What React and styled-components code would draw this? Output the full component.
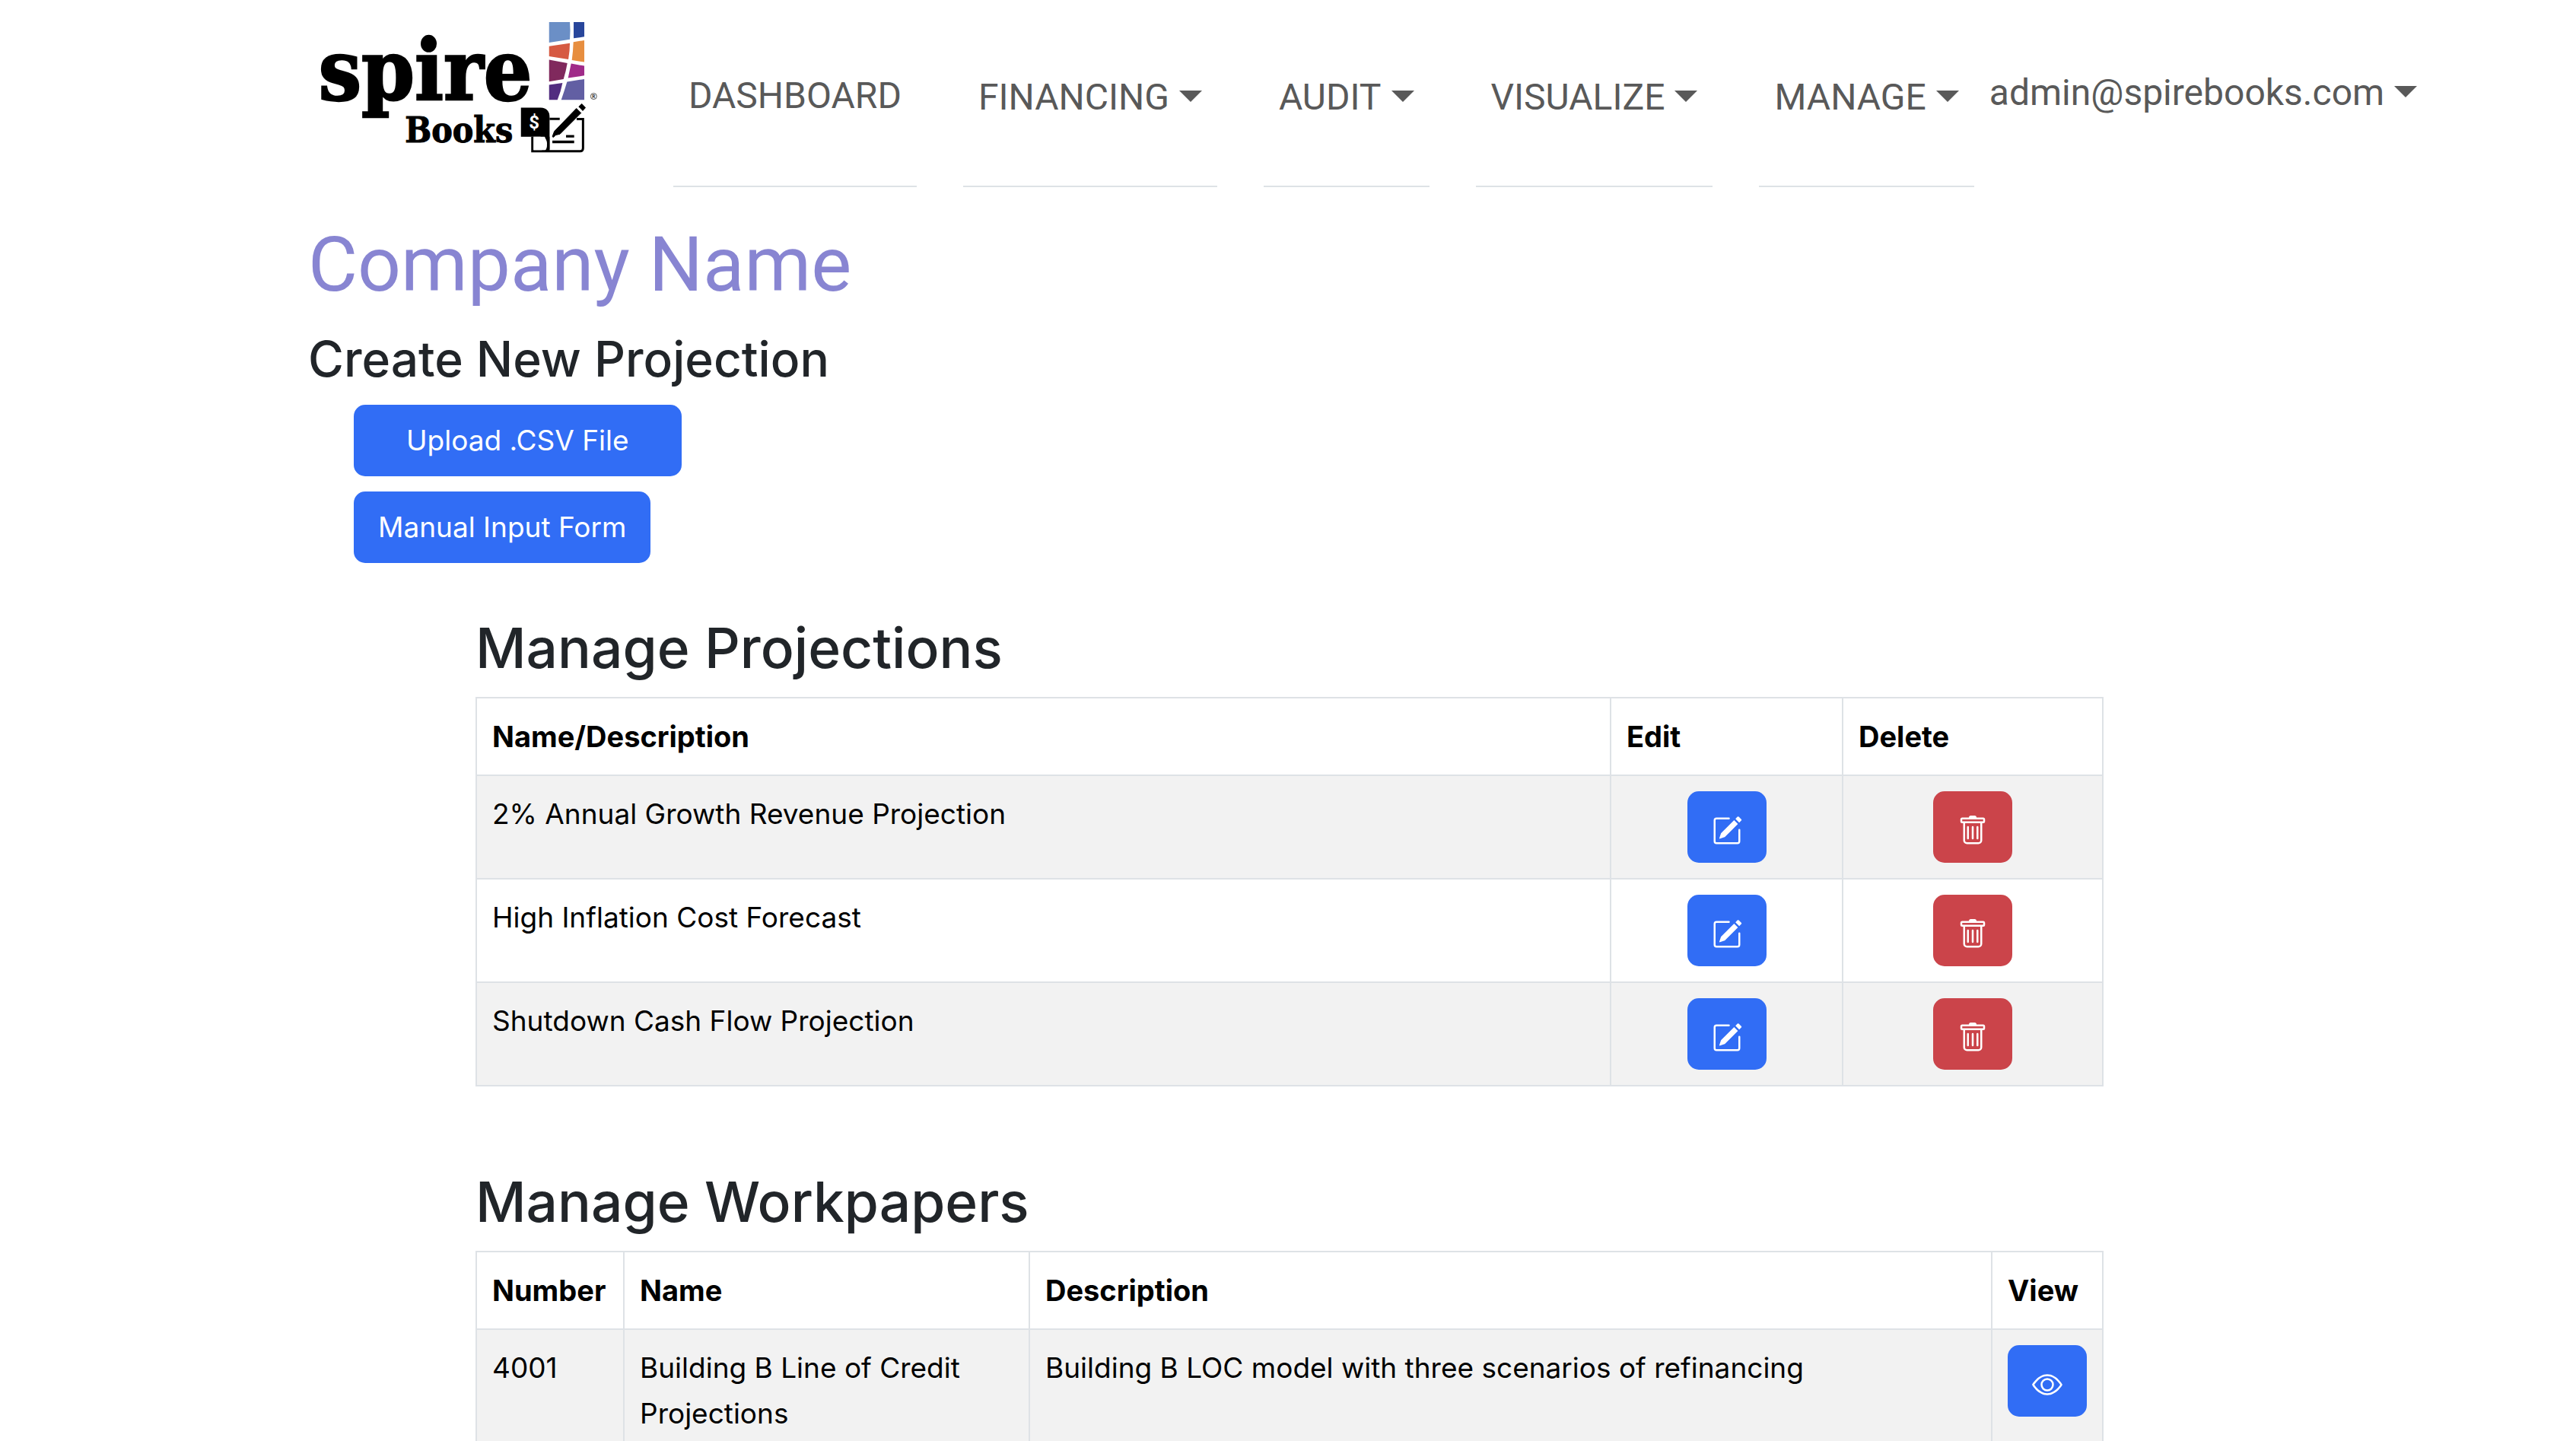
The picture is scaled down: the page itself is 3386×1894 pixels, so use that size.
import React from "react";
import styled, { createGlobalStyle } from "styled-components";
import { BsPencilSquare, BsTrash, BsEye } from "react-icons/bs";

const GlobalStyle = createGlobalStyle`
  *, *::before, *::after { box-sizing: border-box; }
  body {
    margin: 0;
    background: #fff;
    color: #212529;
    font-family: Inter, "Liberation Sans", sans-serif;
    font-size: 37px;
    line-height: 60px;
  }
`;

const Header = styled.header`
  display: flex;
  align-items: flex-start;
  padding: 0 192px 0 417px;
`;

const Brand = styled.a`
  display: block;
  flex: none;
  width: 373px;
  padding-top: 20px;
  margin-right: 95px;
  color: #000;
  svg { display: block; width: 100%; height: auto; overflow: visible; }
`;

const Nav = styled.nav`
  display: flex;
  flex: 1;
  align-items: flex-start;
  font-family: Roboto, "Liberation Sans", sans-serif;
  font-size: 48px;
  line-height: 72px;
`;

const NavList = styled.ul`
  display: flex;
  gap: 61px;
  margin: 0;
  padding: 0;
  list-style: none;
`;

const NavItem = styled.li`
  display: flex;
  height: 246px;
  padding: ${(p) => (p.$menu ? "92px" : "90px")} 20px 0;
  border-bottom: 2px solid #dee2e6;
`;

const NavLink = styled.a`
  height: 72px;
  color: #595959;
  text-decoration: none;
  white-space: nowrap;
`;

const NavButton = styled.button`
  display: flex;
  align-items: center;
  gap: 13px;
  height: 72px;
  padding: 0;
  border: 0;
  background: none;
  color: #595959;
  font: inherit;
  white-space: nowrap;
  &::after {
    content: "";
    margin-bottom: 4px;
    border: 15px solid transparent;
    border-top-color: currentColor;
    border-bottom: 0;
  }
`;

const Account = styled.div`
  padding: 86px 0 0 20px;
`;

const Main = styled.main`
  padding: 0 405px;
`;

const Company = styled.h1`
  margin: 42px 0 22px;
  color: #8885d2;
  font: 400 100px/120px Roboto, "Liberation Sans", sans-serif;
`;

const Subtitle = styled.h2`
  margin: 0 0 18px;
  font-size: 64px;
  font-weight: 500;
  line-height: 84px;
`;

const Actions = styled.div`
  display: flex;
  flex-direction: column;
  align-items: flex-start;
  gap: 20px;
  padding-left: 60px;
`;

const Button = styled.button`
  height: 94px;
  padding: 0 ${(p) => (p.$wide ? "69px" : "32px")};
  border: 0;
  border-radius: 15px;
  background: ${(p) => (p.$danger ? "#cb444a" : "#316df5")};
  color: #fff;
  font: inherit;
`;

const IconButton = styled(Button)`
  display: flex;
  align-items: center;
  padding: 10px 32px 0;
  margin: 0 auto;
  svg { width: 40px; height: 40px; }
`;

const Section = styled.section`
  padding: 0 216px 0 220px;
  margin-top: ${(p) => p.$gap};
`;

const SectionTitle = styled.h2`
  margin: 0 0 16px;
  font-size: 73px;
  font-weight: 500;
  line-height: 96px;
`;

const Table = styled.table`
  width: 100%;
  border-collapse: collapse;
  table-layout: fixed;
  color: #000;
  th, td {
    padding: 20px;
    border: 2px solid #dee2e6;
    text-align: left;
    vertical-align: top;
  }
  th { font-size: 38px; font-weight: 700; }
  tbody tr:nth-child(odd) { background: #f2f2f2; }
`;

const Col = styled.col`
  width: ${(p) => p.$w};
`;

const menus = ["FINANCING", "AUDIT", "VISUALIZE", "MANAGE"];
const projections = [
  "2% Annual Growth Revenue Projection",
  "High Inflation Cost Forecast",
  "Shutdown Cash Flow Projection",
];
const workpapers = [
  {
    number: "4001",
    name: "Building B Line of Credit Projections",
    description: "Building B LOC model with three scenarios of refinancing",
  },
];

function Logo() {
  return (
    <svg viewBox="80 60 1120 560" role="img" aria-label="Spire Books">
      <g fontFamily="'DejaVu Serif Condensed', 'DejaVu Serif', serif" fontWeight="700" fill="#000" stroke="#000">
        <text x="85" y="393" fontSize="334" strokeWidth="7">spire</text>
        <text x="426" y="560" fontSize="138" strokeWidth="3">Books</text>
      </g>
      <path fill="#6b8fc6" d="M995 87H1077Q1080 120 1077 155L995 168Z" />
      <path fill="#28469b" d="M1092 87H1134V145L1092 151Z" />
      <path fill="#d65a42" d="M995 182L1077 170Q1077 200 1071 234L995 222Z" />
      <path fill="#e78e3f" d="M1091 166L1134 159V245L1085 237Q1090 200 1091 166Z" />
      <path fill="#80295d" d="M995 236L1067 249Q1062 280 1052 312L995 322Z" />
      <path fill="#a02b89" d="M1082 251L1134 260V298L1070 308Z" />
      <path fill="#522d80" d="M995 335L1048 327Q1042 360 1028 394H995Z" />
      <path fill="#625fa3" d="M1066 323L1134 312V394H1043Q1055 360 1066 323Z" />
      <circle cx="1171" cy="380" r="12" fill="none" stroke="#333" strokeWidth="2.5" />
      <text x="1165" y="387" fontSize="19" fontFamily="Roboto, sans-serif" fontWeight="700" fill="#333">R</text>
      <path d="M884 425H962Q997 427 997 462V590H985Q990 565 978 540H884Z" />
      <path d="M929 540V597H1118Q1129 597 1129 585V470H1104M997 469H1037" fill="none" stroke="#000" strokeWidth="9" />
      <path d="M934 540H960Q987 542 987 567T965 592H934Z" fill="#fff" />
      <path d="M987 540H997V597H975Q993 585 987 560Z" />
      <path d="M1008 560H1094M1062 538H1094" stroke="#000" strokeWidth="10" />
      <path d="M1103 428L1121 446L1038 529L1021 533L1012 542L1008 539L1016 518Z" stroke="#000" strokeWidth="3" />
      <path d="M1124 408L1140 425L1128 438L1111 421Z" />
      <text x="936" y="506" textAnchor="middle" fontSize="72" fontFamily="Roboto, sans-serif" fontWeight="700" fill="#fff">$</text>
    </svg>
  );
}

export default function App() {
  return (
    <>
      <GlobalStyle />
      <Header>
        <Brand href="#"><Logo /></Brand>
        <Nav>
          <NavList>
            <NavItem><NavLink href="#">DASHBOARD</NavLink></NavItem>
            {menus.map((m) => (
              <NavItem key={m} $menu><NavButton type="button">{m}</NavButton></NavItem>
            ))}
          </NavList>
          <Account><NavButton type="button">admin@spirebooks.com</NavButton></Account>
        </Nav>
      </Header>
      <Main>
        <Company>Company Name</Company>
        <Subtitle>Create New Projection</Subtitle>
        <Actions>
          <Button type="button" $wide>Upload .CSV File</Button>
          <Button type="button">Manual Input Form</Button>
        </Actions>
        <Section $gap="64px">
          <SectionTitle>Manage Projections</SectionTitle>
          <Table>
            <colgroup><Col /><Col $w="305px" /><Col $w="342px" /></colgroup>
            <thead>
              <tr><th scope="col">Name/Description</th><th scope="col">Edit</th><th scope="col">Delete</th></tr>
            </thead>
            <tbody>
              {projections.map((name) => (
                <tr key={name}>
                  <td>{name}</td>
                  <td><IconButton type="button" aria-label={`Edit ${name}`}><BsPencilSquare /></IconButton></td>
                  <td><IconButton type="button" $danger aria-label={`Delete ${name}`}><BsTrash /></IconButton></td>
                </tr>
              ))}
            </tbody>
          </Table>
        </Section>
        <Section $gap="104px">
          <SectionTitle>Manage Workpapers</SectionTitle>
          <Table>
            <colgroup><Col $w="194px" /><Col $w="533px" /><Col /><Col $w="146px" /></colgroup>
            <thead>
              <tr><th scope="col">Number</th><th scope="col">Name</th><th scope="col">Description</th><th scope="col">View</th></tr>
            </thead>
            <tbody>
              {workpapers.map((w) => (
                <tr key={w.number}>
                  <td>{w.number}</td>
                  <td>{w.name}</td>
                  <td>{w.description}</td>
                  <td><IconButton type="button" aria-label={`View ${w.name}`}><BsEye /></IconButton></td>
                </tr>
              ))}
            </tbody>
          </Table>
        </Section>
      </Main>
    </>
  );
}
